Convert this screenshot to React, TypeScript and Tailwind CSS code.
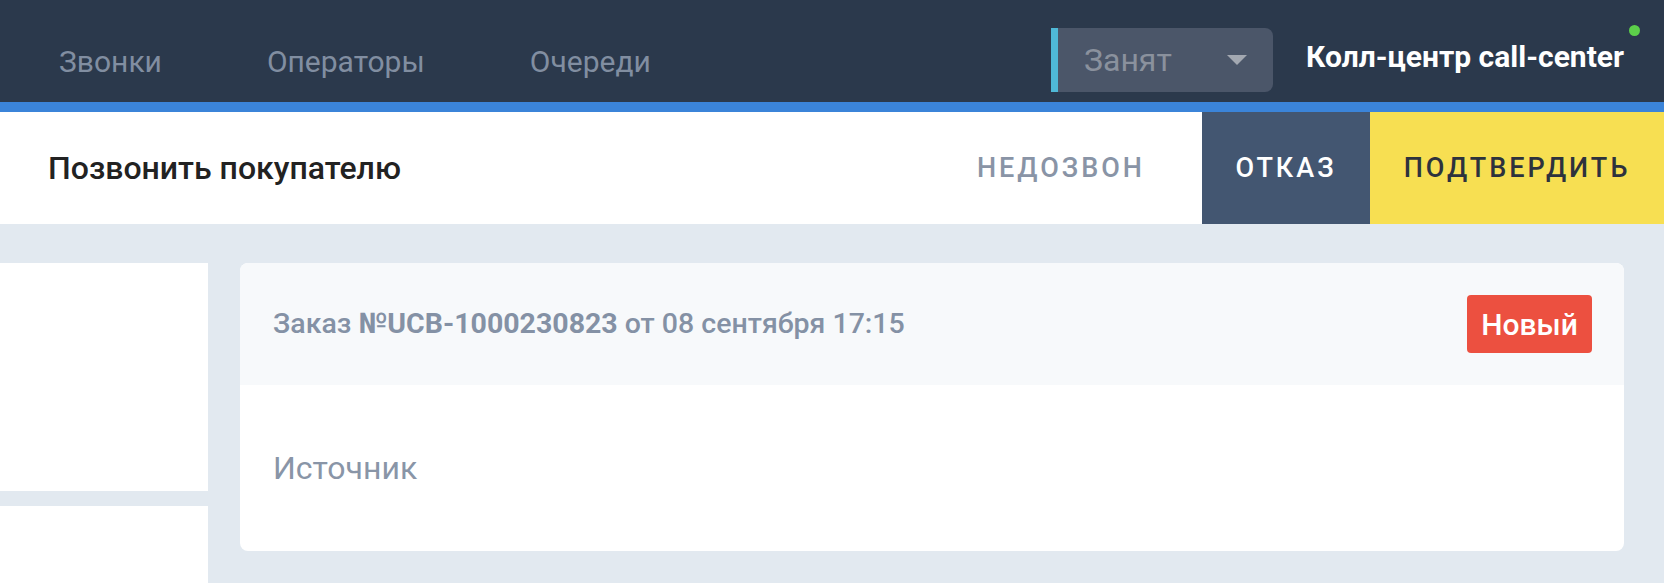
import React from 'react';

const navItems = ['Звонки', 'Операторы', 'Очереди'];

const TopBar: React.FC = () => (
  <header className="flex h-[112px] items-center border-b-[10px] border-[#3b84d9] bg-[#2b394c] pr-[40px]">
    <nav className="flex h-full items-center gap-[105px] pl-[59px] pt-[21px]">
      {navItems.map((item) => (
        <a key={item} className="text-[30px] leading-none text-[#818ea1]">
          {item}
        </a>
      ))}
    </nav>
    <div className="ml-auto mt-[17px] flex items-center">
      <div className="flex h-[64px] w-[222px] items-center overflow-hidden rounded-r-[8px] bg-[#4b5669]">
        <div className="h-full w-[7px] bg-[#4fb8d6]" />
        <span className="ml-[26px] text-[32px] text-[#8a919d]">Занят</span>
        <span className="ml-auto mr-[26px] h-0 w-0 border-x-[10px] border-t-[10px] border-x-transparent border-t-[#a3a8b1]" />
      </div>
      <div className="relative top-[-3px] ml-[33px]">
        <span className="text-[30px] font-bold text-white">Колл-центр call-center</span>
        <span className="absolute right-[-16px] top-[-9px] h-[11px] w-[11px] rounded-full bg-[#5ccf4a]" />
      </div>
    </div>
  </header>
);

const ActionBar: React.FC = () => (
  <div className="flex h-[112px] items-stretch bg-white">
    <h1 className="flex items-center pl-[48px] text-[32px] font-medium text-[#222]">Позвонить покупателю</h1>
    <div className="ml-auto flex">
      <button className="px-[57px] text-[27px] font-medium tracking-[3px] text-[#8994a6]">НЕДОЗВОН</button>
      <button className="w-[168px] bg-[#435671] text-[27px] font-medium tracking-[3px] text-white">ОТКАЗ</button>
      <button className="w-[294px] bg-[#f7df52] text-[27px] font-medium tracking-[3px] text-[#2d323d]">ПОДТВЕРДИТЬ</button>
    </div>
  </div>
);

const OrderCard: React.FC = () => (
  <div className="flex h-[288px] flex-1 flex-col overflow-hidden rounded-[8px] bg-white">
    <div className="flex h-[122px] items-center justify-between bg-[#f7f9fb] pl-[33px] pr-[32px]">
      <span className="text-[28.5px] font-medium text-[#8491a5]">
        Заказ <b className="font-bold">№UCB-1000230823</b> от 08 сентября 17:15
      </span>
      <span className="flex h-[58px] w-[125px] items-center justify-center rounded-[4px] bg-[#ec5040] text-[30px] font-medium text-white">
        Новый
      </span>
    </div>
    <div className="flex flex-1 items-center pl-[33px]">
      <span className="text-[32px] text-[#8995a7]">Источник</span>
    </div>
  </div>
);

export default function App() {
  return (
    <div className="h-[583px] overflow-hidden bg-[#e2e9f0] font-['Roboto',sans-serif]">
      <TopBar />
      <ActionBar />
      <div className="flex gap-[32px] pr-[40px] pt-[39px]">
        <div className="flex w-[208px] flex-col gap-[15px]">
          <div className="h-[228px] bg-white" />
          <div className="h-[100px] bg-white" />
        </div>
        <OrderCard />
      </div>
    </div>
  );
}
